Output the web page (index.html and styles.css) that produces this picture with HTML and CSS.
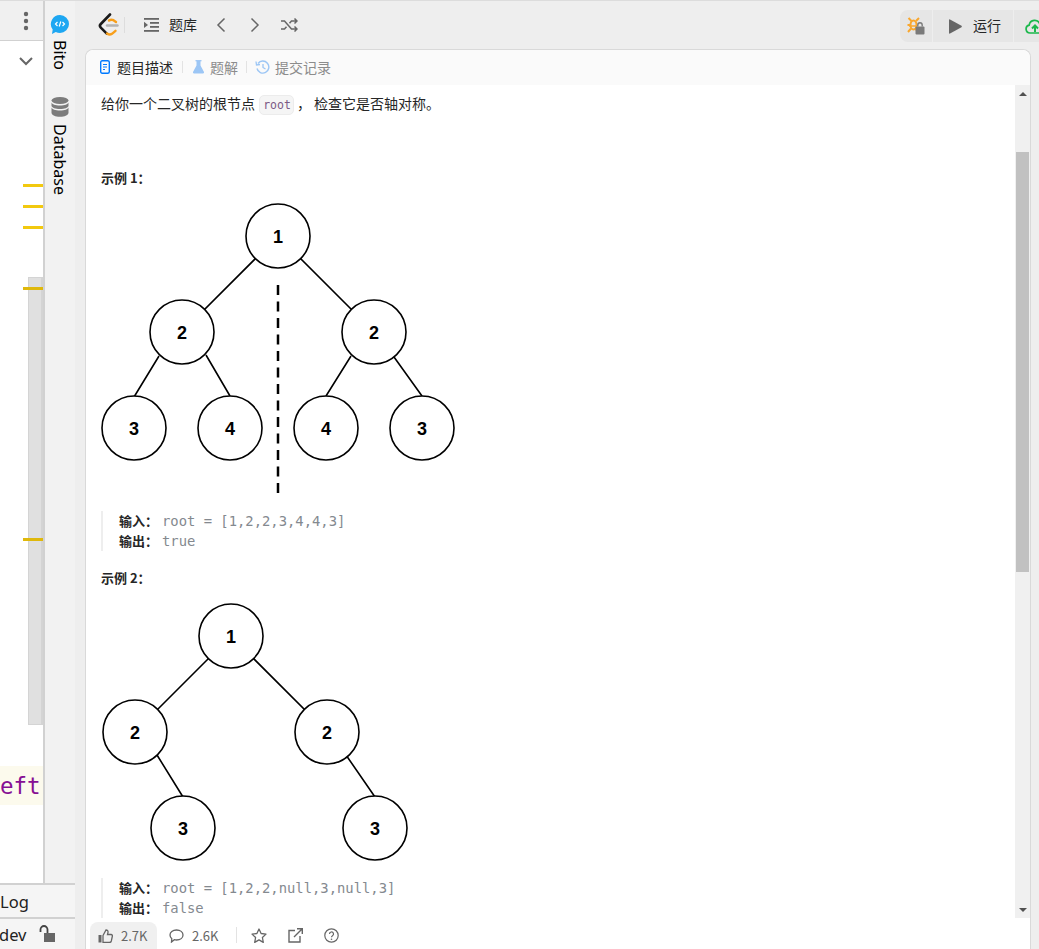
FILE: index.html
```html
<!DOCTYPE html>
<html lang="zh">
<head>
  <meta charset="UTF-8" />
  <meta name="viewport" content="width=device-width, initial-scale=1.0" />
  <title>对称二叉树</title>
  <link rel="stylesheet" href="styles.css">
</head>
<body>
  <div class="side">
    <div class="side-top">
      <div class="pane">
        <div class="pane-bar">
          <svg class="kebab" width="6" height="20" viewBox="0 0 6 20"><circle cx="3" cy="3" r="2.2"/><circle cx="3" cy="10" r="2.2"/><circle cx="3" cy="17" r="2.2"/></svg>
        </div>
        <div class="pane-sub">
          <svg width="16" height="10" viewBox="0 0 16 10"><path d="M2 2l6 6 6-6" fill="none" stroke="#666" stroke-width="2"/></svg>
        </div>
        <div class="editor">
          <div class="code-line">eft</div>
          <div class="map-thumb"></div>
          <i class="mark mark-1"></i>
          <i class="mark mark-2"></i>
          <i class="mark mark-3"></i>
          <i class="mark mark-4"></i>
          <i class="mark mark-5"></i>
        </div>
      </div>
      <div class="strip">
        <div class="strip-item strip-bito">
          <svg width="20" height="21" viewBox="0 0 20 21"><path d="M10 1a9 9 0 0 1 0 18c-1.500 0-3-.4-4.200-1L2 20l.7-4.600A9 9 0 0 1 10 1z" fill="#1ea7f2"/><path d="M7.500 8L5.500 10l2 2M12.500 8l2 2-2 2M10.800 7.500l-1.600 5" fill="none" stroke="#fff" stroke-width="1.200"/></svg>
          <span>Bito</span>
        </div>
        <div class="strip-item strip-db">
          <svg width="18" height="20" viewBox="0 0 18 20" fill="#7c7c7c"><ellipse cx="9" cy="3.500" rx="8.500" ry="3.500"/><path d="M.5 5.500c1 2 3.500 3 8.500 3s7.500-1 8.500-3v3.500c-1 2-3.500 3-8.500 3S1.500 11 .5 9zM.5 10.500c1 2 3.500 3 8.500 3s7.500-1 8.500-3V16c-1 2.500-3.500 3.800-8.500 3.800S1.500 18.500.5 16z"/></svg>
          <span>Database</span>
        </div>
      </div>
    </div>
    <div class="status status-log">Log</div>
    <div class="status status-dev">
      <span>dev</span>
      <svg width="17" height="18" viewBox="0 0 17 18"><path d="M1.500 7V4.500a3.500 3.500 0 0 1 7 0V8" fill="none" stroke="#444" stroke-width="1.800"/><rect x="5" y="8" width="11" height="9" fill="#666"/></svg>
    </div>
  </div>

  <div class="main">
    <div class="topbar">
      <svg class="logo" width="22" height="24" viewBox="0 0 22 24"><path d="M12 1.500L2.800 11q-1.800 1.800 0 3.600l6 6" fill="none" stroke="#1a1a1a" stroke-width="2.600" stroke-linecap="round"/><path d="M11 7.500q2-1.500 4.500-.3l2.500 1.800M9 20.500q2.500 1.800 5 .3l3.500-3" fill="none" stroke="#f89f1b" stroke-width="2.400" stroke-linecap="round"/><path d="M9 12.500h10.500" stroke="#b3b3b3" stroke-width="2.400" stroke-linecap="round"/></svg>
      <i class="top-sep"></i>
      <svg class="ico-list" width="15" height="14" viewBox="0 0 15 14" fill="#666"><rect width="15" height="1.800"/><rect x="6" y="4" width="9" height="1.800"/><rect x="6" y="8" width="9" height="1.800"/><rect y="12" width="15" height="1.800"/><path d="M0 3.800l4 3.100-4 3.100z"/></svg>
      <span class="top-title">题库</span>
      <svg class="ico-prev" width="10" height="16" viewBox="0 0 10 16"><path d="M8.500 1.500L2 8l6.500 6.500" fill="none" stroke="#666" stroke-width="1.500"/></svg>
      <svg class="ico-next" width="10" height="16" viewBox="0 0 10 16"><path d="M1.500 1.500L8 8l-6.500 6.500" fill="none" stroke="#666" stroke-width="1.500"/></svg>
      <svg class="ico-shuffle" width="17" height="14" viewBox="0 0 17 14"><path d="M0 3h3.500l7 8H16M0 11h3.500l2-2.300M8.500 5.300l2-2.300H16M13.500.5L16 3l-2.500 2.500M13.500 8.500L16 11l-2.500 2.500" fill="none" stroke="#666" stroke-width="1.500"/></svg>
      <div class="actions">
        <div class="act act-bug">
          <svg width="18" height="18" viewBox="0 0 18 18"><g fill="none" stroke="#f9a72e" stroke-width="2"><ellipse cx="6.500" cy="8" rx="3" ry="4.500"/><path d="M1.500 1l3 3M12 1L9 4M.5 8h3M1 15l3-3.500M9 12l1.500 3"/></g><path d="M2 9h7" stroke="#f9a72e" stroke-width="1.500"/><rect x="8.500" y="9.500" width="9" height="8" rx="1" fill="#7a7a7a"/><path d="M10.800 9.500V8a2.200 2.200 0 0 1 4.400 0v1.500" fill="none" stroke="#7a7a7a" stroke-width="1.400"/></svg>
        </div>
        <div class="act act-run">
          <svg width="13" height="15" viewBox="0 0 13 15"><path d="M0 1q0-1 1-.5l11.500 6.300q.7.700 0 1.400L1 14.500q-1 .5-1-.5z" fill="#666"/></svg>
          <span>运行</span>
        </div>
        <div class="act act-submit">
          <svg width="20" height="15" viewBox="0 0 20 15"><path d="M5 14a4 4 0 0 1-.8-7.900A5.500 5.500 0 0 1 14.800 5 4.500 4.500 0 0 1 15 14z" fill="none" stroke="#1cb84c" stroke-width="1.700"/><path d="M10 13V7M7 9.500L10 6.500l3 3" fill="none" stroke="#1cb84c" stroke-width="2"/></svg>
        </div>
      </div>
    </div>

    <div class="card">
      <div class="tabs">
        <div class="tab tab-on">
          <svg width="10" height="14" viewBox="0 0 10 14"><rect x=".7" y=".7" width="8.600" height="12.600" rx="1.500" fill="none" stroke="#007aff" stroke-width="1.400"/><path d="M3 4.500h4M3 7h4M3 9.500h2" stroke="#007aff" stroke-width="1.100"/></svg>
          <span>题目描述</span>
        </div>
        <i class="tab-sep"></i>
        <div class="tab">
          <svg width="13" height="14" viewBox="0 0 13 14"><path d="M4.500 1v4.500L1 12q-.4 1.300 1 1.500h9q1.400-.2 1-1.500L8.500 5.500V1z" fill="#9cc6f5"/><path d="M3.500 .7h6" stroke="#9cc6f5" stroke-width="1.300"/></svg>
          <span>题解</span>
        </div>
        <i class="tab-sep tab-sep-2"></i>
        <div class="tab">
          <svg width="15" height="14" viewBox="0 0 15 14"><path d="M3 3.500A6 6 0 1 1 2 8.500" fill="none" stroke="#9cc6f5" stroke-width="1.400"/><path d="M1 1.500l.5 3.500 3.500-.5" fill="none" stroke="#9cc6f5" stroke-width="1.300"/><path d="M8 4v3.500l2.500 1.500" fill="none" stroke="#9cc6f5" stroke-width="1.300"/></svg>
          <span>提交记录</span>
        </div>
      </div>

      <div class="body">
        <div class="content">
          <p class="intro">给你一个二叉树的根节点 <code>root</code> ， 检查它是否轴对称。</p>
          <h4 class="eg eg-1">示例 1：</h4>
          <svg class="tree tree-1" width="360" height="296" viewBox="101 200 360 296">
            <path class="edge" d="M278 236L182 332M278 236L374 332M159 356L134 397M206 355L230 396M351 356L326 396M394 357L422 396"/>
            <path class="axis" d="M278 285V493"/>
            <g class="node"><circle cx="278" cy="236" r="32"/><text x="278" y="243">1</text></g>
            <g class="node"><circle cx="182" cy="332" r="32"/><text x="182" y="339">2</text></g>
            <g class="node"><circle cx="374" cy="332" r="32"/><text x="374" y="339">2</text></g>
            <g class="node"><circle cx="134" cy="428" r="32"/><text x="134" y="435">3</text></g>
            <g class="node"><circle cx="230" cy="428" r="32"/><text x="230" y="435">4</text></g>
            <g class="node"><circle cx="326" cy="428" r="32"/><text x="326" y="435">4</text></g>
            <g class="node"><circle cx="422" cy="428" r="32"/><text x="422" y="435">3</text></g>
          </svg>
          <div class="sample sample-1">
            <div><b>输入：</b><span>root = [1,2,2,3,4,4,3]</span></div>
            <div><b>输出：</b><span>true</span></div>
          </div>
          <h4 class="eg eg-2">示例 2：</h4>
          <svg class="tree tree-2" width="360" height="264" viewBox="101 600 360 264">
            <path class="edge" d="M231 636L135 732M231 636L327 732M157 755L183 797M346 755L375 797"/>
            <g class="node"><circle cx="231" cy="636" r="32"/><text x="231" y="643">1</text></g>
            <g class="node"><circle cx="135" cy="732" r="32"/><text x="135" y="739">2</text></g>
            <g class="node"><circle cx="327" cy="732" r="32"/><text x="327" y="739">2</text></g>
            <g class="node"><circle cx="183" cy="828" r="32"/><text x="183" y="835">3</text></g>
            <g class="node"><circle cx="375" cy="828" r="32"/><text x="375" y="835">3</text></g>
          </svg>
          <div class="sample sample-2">
            <div><b>输入：</b><span>root = [1,2,2,null,3,null,3]</span></div>
            <div><b>输出：</b><span>false</span></div>
          </div>
        </div>
        <div class="scroll">
          <i class="arrow arrow-up"></i>
          <div class="scroll-track"><div class="scroll-thumb"></div></div>
          <i class="arrow arrow-down"></i>
        </div>
      </div>

      <div class="foot">
        <div class="foot-like">
          <svg width="15" height="14" viewBox="0 0 15 14"><rect x=".5" y="6" width="3" height="7.500" fill="#666"/><path d="M5 6.500l3-5.500c1.500 0 2.200 1 2 2.500L9.500 5.500h3.500q1.700.2 1.300 2l-1 4.500q-.4 1.500-2 1.500H5z" fill="none" stroke="#666" stroke-width="1.300"/></svg>
          <span>2.7K</span>
        </div>
        <div class="foot-comment">
          <svg width="15" height="14" viewBox="0 0 15 14"><path d="M7.500 1C11.400 1 14 3.200 14 6s-2.600 5-6.500 5c-.8 0-1.500-.1-2.200-.3L2.500 13l.3-3.300C1.700 8.800 1 7.500 1 6c0-2.800 2.600-5 6.500-5z" fill="none" stroke="#666" stroke-width="1.300"/></svg>
          <span>2.6K</span>
        </div>
        <i class="foot-sep"></i>
        <svg class="foot-star" width="16" height="15" viewBox="0 0 16 15"><path d="M8 1l2.100 4.500 4.900.6-3.600 3.400.9 4.900L8 11.900l-4.300 2.500.9-4.900L1 6.100l4.900-.6z" fill="none" stroke="#666" stroke-width="1.300" stroke-linejoin="round"/></svg>
        <svg class="foot-share" width="15" height="15" viewBox="0 0 15 15"><path d="M7 2.500H1v11.500h11V8M6 9L14 1M9 .7h5.300V6" fill="none" stroke="#666" stroke-width="1.400"/></svg>
        <svg class="foot-help" width="15" height="15" viewBox="0 0 15 15"><circle cx="7.500" cy="7.500" r="6.700" fill="none" stroke="#666" stroke-width="1.200"/><path d="M5.500 6a2 2 0 1 1 3 1.700c-.7.400-1 .8-1 1.600" fill="none" stroke="#666" stroke-width="1.200"/><circle cx="7.500" cy="11.200" r=".8" fill="#666"/></svg>
      </div>
    </div>
  </div>
</body>
</html>
```

FILE: styles.css
```css
* { box-sizing: border-box; }

html, body {
  height: 100%;
}

body {
  margin: 0;
  display: flex;
  height: 949px;
  overflow: hidden;
  background: #eeeeee;
  border-top: 1px solid #dcdcdc;
  font-family: "Noto Sans CJK SC", "Noto Sans", sans-serif;
  color: #262626;
}

/* left ide column */
.side {
  width: 75px;
  flex-shrink: 0;
  display: flex;
  flex-direction: column;
}

.side-top {
  display: flex;
  height: 883px;
}

.pane {
  width: 45px;
  display: flex;
  flex-direction: column;
  border-right: 2px solid #d1d1d1;
}

.pane-bar {
  height: 40px;
  display: flex;
  justify-content: flex-end;
  align-items: center;
  padding-right: 14px;
  background: #f0f0f0;
  border-bottom: 1px solid #d1d1d1;
}

.kebab { fill: #666; }

.pane-sub {
  height: 40px;
  display: flex;
  justify-content: flex-end;
  align-items: center;
  padding-right: 9px;
  background: #fff;
}

.editor {
  position: relative;
  flex: 1;
  background: #fff;
}

.code-line {
  margin-top: 685px;
  height: 39px;
  background: #fcfaed;
  color: #871094;
  font: 22.500px/41px "DejaVu Sans Mono", monospace;
  overflow: hidden;
}

.map-thumb {
  position: absolute;
  left: 28px;
  right: 0;
  top: 196px;
  height: 448px;
  background: #e0e0e0;
  border: 1px solid #d4d4d4;
  border-right-width: 2px;
}

.mark {
  position: absolute;
  left: 23px;
  right: 0;
  height: 3px;
  background: #f2c90f;
}

.mark-1 { top: 103px; }
.mark-2 { top: 124px; }
.mark-3 { top: 145px; }
.mark-4 { top: 206px; background: #dfb80b; }
.mark-5 { top: 457px; background: #dfb80b; }

.strip {
  flex: 1;
  background: #f2f2f2;
  display: flex;
  flex-direction: column;
  padding-top: 13px;
}

.strip-item {
  display: flex;
  flex-direction: column;
  align-items: center;
  color: #000;
  font: 16px "Noto Sans", sans-serif;
}

.strip-item span {
  writing-mode: vertical-rl;
  line-height: 20px;
}

.strip-bito { margin-bottom: 27px; }
.strip-bito span { margin-top: 5px; }
.strip-db span { margin-top: 7px; }

.status {
  height: 34px;
  border-top: 2px solid #d1d1d1;
  background: #f5f5f5;
  font: 16.500px "Noto Sans", sans-serif;
  color: #222;
  display: flex;
  align-items: center;
  overflow: hidden;
}

.status-dev {
  height: 32px;
  gap: 12px;
}

.status-dev span { margin-left: -1px; }

/* main column */
.main {
  flex: 1;
  min-width: 0;
  display: flex;
  flex-direction: column;
}

.topbar {
  height: 48px;
  display: flex;
  align-items: center;
  padding-left: 23px;
  font-size: 14px;
  flex-shrink: 0;
}

.top-sep {
  width: 1px;
  height: 16px;
  background: #ddd;
  margin: 0 19px 0 4px;
}

.top-title {
  margin: 0 19px 2px 10px;
}

.ico-next { margin-left: 24px; }
.ico-shuffle { margin-left: 21px; }

.actions {
  margin-left: auto;
  display: flex;
  gap: 1px;
  height: 32px;
  overflow: hidden;
  margin-top: 2px;
}

.act {
  display: flex;
  align-items: center;
  background: #e6e6e6;
  flex-shrink: 0;
}

.act-bug {
  width: 32px;
  justify-content: center;
  border-radius: 8px 0 0 8px;
}

.act-run {
  width: 80px;
  padding-left: 16px;
  gap: 11px;
}

.act-run span { margin-bottom: 2px; }

.act-submit {
  width: 25px;
  padding-left: 11px;
  overflow: hidden;
}

.act-submit svg { flex-shrink: 0; }

.card {
  flex: 1;
  min-height: 0;
  width: 946px;
  margin-left: 10px;
  background: #fff;
  border: 1px solid #d9d9d9;
  border-bottom: 0;
  border-radius: 8px 8px 0 0;
  display: flex;
  flex-direction: column;
}

.tabs {
  height: 35px;
  flex-shrink: 0;
  display: flex;
  align-items: center;
  padding: 0 0 2px 14px;
  background: #fafafa;
  border-radius: 8px 8px 0 0;
  font-size: 14px;
  color: #8c8c8c;
}

.tab {
  display: flex;
  align-items: center;
  gap: 5px;
}

.tab-on {
  color: #262626;
  gap: 7px;
}

.tab-sep {
  width: 1px;
  height: 12px;
  background: #e3e3e3;
  margin: 0 9px;
}

.tab-sep-2 { margin: 0 8px; }

.body {
  height: 833px;
  flex-shrink: 0;
  display: flex;
}

.content {
  flex: 1;
  min-width: 0;
  overflow: hidden;
  padding: 9px 0 0 15px;
}

.intro {
  margin: 0;
  font-size: 14px;
  line-height: 18px;
  height: 18px;
}

.intro code {
  display: inline-block;
  height: 20px;
  padding: 0 2px 0 3px;
  margin-left: 1px;
  background: #f5f5f5;
  border: 1px solid #ececec;
  border-radius: 5px;
  font: 11.500px/18px "DejaVu Sans Mono", monospace;
  color: #7c5a86;
  vertical-align: 0;
}

.eg {
  margin: 0;
  font-size: 13px;
  line-height: 18px;
  font-weight: 700;
}

.eg-1 { margin-top: 57px; }
.eg-2 { margin-top: 18px; }

.tree {
  display: block;
}

.tree-1 { margin-top: 13px; }
.tree-2 { margin-top: 13px; }

.edge {
  fill: none;
  stroke: #000;
  stroke-width: 1.600;
}

.axis {
  fill: none;
  stroke: #000;
  stroke-width: 2.500;
  stroke-dasharray: 10 6.500;
}

.node circle {
  fill: #fff;
  stroke: #000;
  stroke-width: 1.600;
}

.node text {
  font: 700 18px "Liberation Sans", sans-serif;
  text-anchor: middle;
  fill: #000;
}

.sample {
  border-left: 2px solid #eee;
  padding-left: 16px;
  font-size: 13px;
  line-height: 20px;
}

.sample div {
  display: flex;
  height: 20px;
}

.sample b {
  font-weight: 700;
  width: 43px;
}

.sample span {
  font: 13.850px/20px "DejaVu Sans Mono", monospace;
  color: #84898f;
  white-space: nowrap;
}

.sample-1 { margin-top: 15px; }
.sample-2 { margin-top: 14px; }

.scroll {
  width: 15px;
  background: #f0f0f0;
  display: flex;
  flex-direction: column;
  align-items: center;
}

.arrow {
  width: 0;
  height: 0;
  border-left: 4px solid transparent;
  border-right: 4px solid transparent;
  flex-shrink: 0;
}

.arrow-up {
  border-bottom: 4px solid #505050;
  margin: 7px 0 4px;
}

.arrow-down {
  border-top: 4px solid #505050;
  margin: 5px 0 6px;
}

.scroll-track {
  flex: 1;
  width: 100%;
  padding: 52px 1px 0;
}

.scroll-thumb {
  height: 420px;
  background: #c1c1c1;
}

.foot {
  flex: 1;
  display: flex;
  align-items: flex-end;
  padding-left: 4px;
  background: #fff;
  font-size: 13px;
  color: #666;
}

.foot > * { flex-shrink: 0; }

.foot-like {
  width: 67px;
  height: 27px;
  border-radius: 8px 8px 0 0;
  background: #f0f0f0;
  display: flex;
  align-items: center;
  padding-left: 8px;
  gap: 8px;
}

.foot-comment {
  height: 27px;
  display: flex;
  align-items: center;
  margin-left: 12px;
  gap: 8px;
}

.foot-sep {
  width: 1px;
  height: 16px;
  background: #e3e3e3;
  margin: 0 14px 6px 18px;
}

.foot-star { margin: 0 0 6px 0; }
.foot-share { margin: 0 0 6px 21px; }
.foot-help { margin: 0 0 6px 21px; }
```
